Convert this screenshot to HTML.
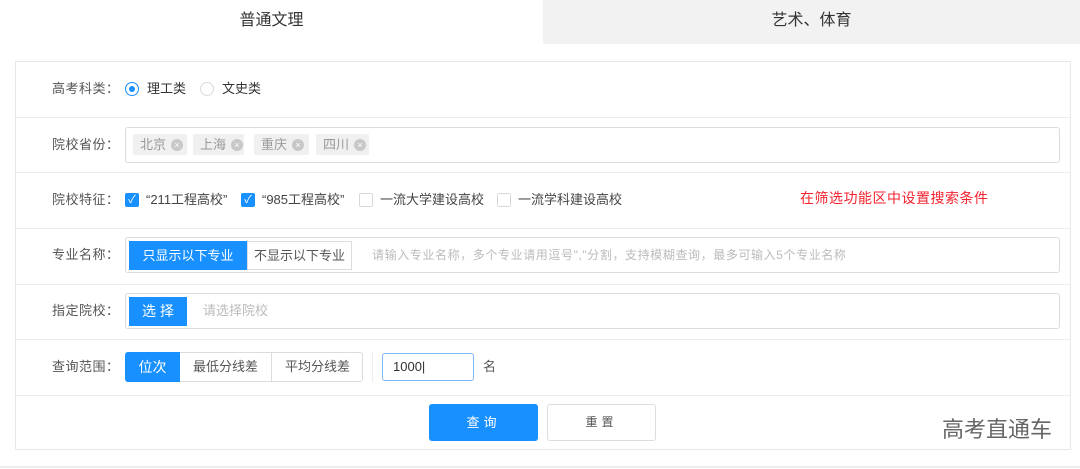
<!DOCTYPE html>
<html><head><meta charset="utf-8"><style>
*{margin:0;padding:0;box-sizing:border-box}
body{width:1080px;height:469px;background:#fff;font-family:"Liberation Sans","Noto Sans CJK SC",sans-serif;color:#555;font-size:13px;position:relative;overflow:hidden}
.a{position:absolute}
.tab{top:0;height:44px;line-height:42px;text-align:center;font-size:16px;color:#333}
.panel{left:15px;top:61px;width:1056px;height:389px;border:1px solid #e8e8e8}
.hl{left:16px;width:1054px;height:1px;background:#ececec}
.lbl{left:52px;font-size:13px;color:#555;line-height:16px;letter-spacing:0.5px}
.box{border:1px solid #dcdcdc;border-radius:3px;background:#fff}
.tag{top:134px;height:21px;background:#f0f0f0;border-radius:2px;color:#999;line-height:21px;padding-left:7px;font-size:13px}
.x{display:inline-block;width:12px;height:12px;border-radius:50%;background:#c8c8c8;color:#fff;font-size:9px;line-height:12px;text-align:center;margin-left:5px;vertical-align:middle;position:relative;top:-1px}
.cb{width:14px;height:14px;border-radius:2px;top:193px}
.blue{background:#1890ff;color:#fff}
.t{line-height:16px}
</style></head><body>
<div class="a tab" style="left:0;width:543px">普通文理</div>
<div class="a tab" style="left:543px;width:537px;background:#f2f2f2">艺术、体育</div>
<div class="a panel"></div>
<div class="a hl" style="top:117px"></div>
<div class="a hl" style="top:172px"></div>
<div class="a hl" style="top:228px"></div>
<div class="a hl" style="top:284px"></div>
<div class="a hl" style="top:339px"></div>
<div class="a hl" style="top:395px"></div>
<div class="a" style="left:0;top:466px;width:1080px;height:2px;background:#eee"></div>

<div class="a lbl" style="top:81px">高考科类：</div>
<div class="a" style="left:125px;top:82px;width:14px;height:14px;border-radius:50%;border:1px solid #1890ff"><div style="margin:3px;width:6px;height:6px;border-radius:50%;background:#1890ff"></div></div>
<div class="a t" style="left:147px;top:81px;color:#333">理工类</div>
<div class="a" style="left:200px;top:82px;width:14px;height:14px;border-radius:50%;border:1px solid #d9d9d9"></div>
<div class="a t" style="left:222px;top:81px;color:#333">文史类</div>

<div class="a lbl" style="top:137px">院校省份：</div>
<div class="a box" style="left:125px;top:127px;width:935px;height:36px"></div>
<div class="a tag" style="left:133px;width:54px">北京<span class="x">×</span></div>
<div class="a tag" style="left:193px;width:51px">上海<span class="x">×</span></div>
<div class="a tag" style="left:254px;width:55px">重庆<span class="x">×</span></div>
<div class="a tag" style="left:316px;width:53px">四川<span class="x">×</span></div>

<div class="a lbl" style="top:192px">院校特征：</div>
<div class="a cb blue" style="left:125px;font-size:11px;text-align:center;line-height:14px">✓</div>
<div class="a t" style="left:146px;top:192px;color:#444">“211工程高校”</div>
<div class="a cb blue" style="left:241px;font-size:11px;text-align:center;line-height:14px">✓</div>
<div class="a t" style="left:262px;top:192px;color:#444">“985工程高校”</div>
<div class="a cb" style="left:359px;border:1px solid #d9d9d9"></div>
<div class="a t" style="left:380px;top:192px;color:#444">一流大学建设高校</div>
<div class="a cb" style="left:497px;border:1px solid #d9d9d9"></div>
<div class="a t" style="left:518px;top:192px;color:#444">一流学科建设高校</div>
<div class="a" style="left:800px;top:190px;color:#f5222d;font-size:14px;line-height:17px;letter-spacing:0.5px">在筛选功能区中设置搜索条件</div>

<div class="a lbl" style="top:247px">专业名称：</div>
<div class="a box" style="left:125px;top:237px;width:935px;height:36px"></div>
<div class="a blue" style="left:129px;top:241px;width:118px;height:29px;line-height:29px;text-align:center">只显示以下专业</div>
<div class="a" style="left:247px;top:241px;width:105px;height:29px;line-height:27px;text-align:center;border:1px solid #ddd;color:#555">不显示以下专业</div>
<div class="a t" style="left:372px;top:247px;color:#bbb;font-size:12px;letter-spacing:0.6px">请输入专业名称，多个专业请用逗号","分割，支持模糊查询，最多可输入5个专业名称</div>

<div class="a lbl" style="top:303px">指定院校：</div>
<div class="a box" style="left:125px;top:293px;width:935px;height:36px"></div>
<div class="a blue" style="left:129px;top:297px;width:58px;height:29px;line-height:29px;text-align:center;font-size:14px">选 择</div>
<div class="a t" style="left:203px;top:303px;color:#bbb">请选择院校</div>

<div class="a lbl" style="top:359px">查询范围：</div>
<div class="a box" style="left:125px;top:352px;width:238px;height:30px"></div>
<div class="a blue" style="left:125px;top:352px;width:55px;height:30px;line-height:30px;text-align:center;border-radius:3px 0 0 3px;font-size:14px">位次</div>
<div class="a" style="left:271px;top:353px;width:1px;height:28px;background:#ddd"></div>
<div class="a t" style="left:193px;top:359px">最低分线差</div>
<div class="a t" style="left:285px;top:359px">平均分线差</div>
<div class="a" style="left:372px;top:352px;width:1px;height:30px;background:#eee"></div>
<div class="a" style="left:382px;top:353px;width:92px;height:28px;border:1px solid #7db9f5;border-radius:3px;padding-left:10px;line-height:26px;color:#333">1000|</div>
<div class="a t" style="left:483px;top:359px">名</div>

<div class="a blue" style="left:429px;top:404px;width:109px;height:37px;line-height:37px;text-align:center;border-radius:3px;letter-spacing:4px">查询</div>
<div class="a" style="left:547px;top:404px;width:109px;height:37px;line-height:35px;text-align:center;border-radius:3px;border:1px solid #ddd;letter-spacing:4px;font-size:12px">重置</div>
<div class="a" style="left:942px;top:416px;font-size:22px;color:#666;line-height:28px">高考直通车</div>
</body></html>
